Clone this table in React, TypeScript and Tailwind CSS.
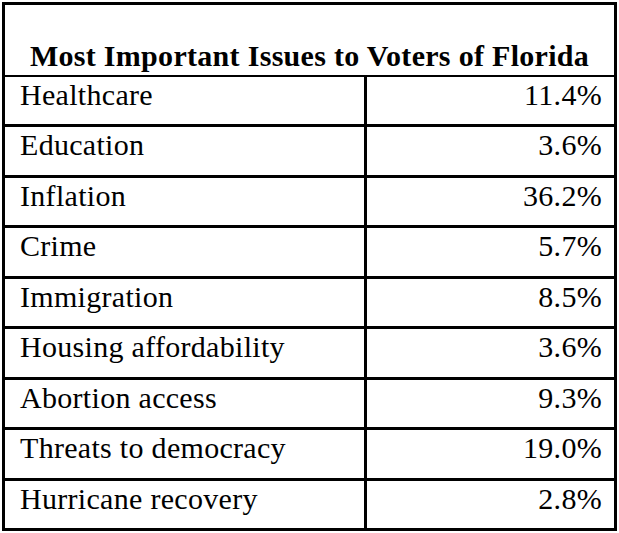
const ROWS = [
  { issue: "Healthcare", pct: "11.4%" },
  { issue: "Education", pct: "3.6%" },
  { issue: "Inflation", pct: "36.2%" },
  { issue: "Crime", pct: "5.7%" },
  { issue: "Immigration", pct: "8.5%" },
  { issue: "Housing affordability", pct: "3.6%" },
  { issue: "Abortion access", pct: "9.3%" },
  { issue: "Threats to democracy", pct: "19.0%" },
  { issue: "Hurricane recovery", pct: "2.8%" },
];

export default function App() {
  return (
    <div className="h-[533px] w-[619px] bg-white pl-[2px] pt-[2px] font-['Liberation_Serif','Times_New_Roman',serif] text-black">
      <div className="flex h-[529px] w-[615px] flex-col border-[3px] border-black">
        {/* Title */}
        <div className="flex h-[72px] shrink-0 items-end justify-center border-b-[2px] border-black pb-[3px]">
          <span className="text-[30px] font-bold leading-[32px] tracking-[0.3px]">
            Most Important Issues to Voters of Florida
          </span>
        </div>

        {/* Rows */}
        <div className="flex flex-1 flex-col">
          {ROWS.map((r, i) => (
            <div
              key={r.issue}
              className={`grid flex-1 grid-cols-[362px_1fr] ${i < ROWS.length - 1 ? "border-b-[3px] border-black" : ""}`}
            >
              <div className="border-r-[3px] border-black pl-[15px] pt-[2px] text-[30px] leading-[32px] tracking-[0.3px]">
                {r.issue}
              </div>
              <div className="pr-[12px] pt-[2px] text-right text-[30px] leading-[32px] tracking-[0.3px]">{r.pct}</div>
            </div>
          ))}
        </div>
      </div>
    </div>
  );
}
